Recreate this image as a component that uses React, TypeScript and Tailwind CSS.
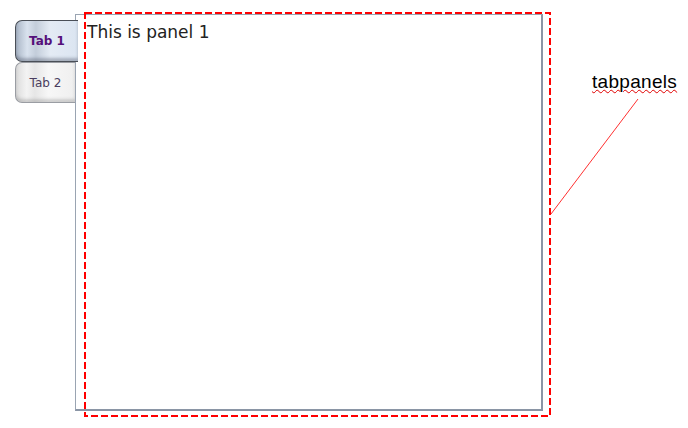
export default function App() {
	return (
		<div className="relative h-[428px] w-[688px] overflow-hidden bg-white">
			<div className="flex pl-[15px] pt-[14px]">
				{/* tabs */}
				<div className="relative z-10 mt-[6px] flex w-[60px] flex-col">
					<div
						className="flex h-[42px] w-[63px] items-center justify-center rounded-l-[7px] border border-r-0 border-[#4a4f57] font-['DejaVu_Sans',sans-serif] text-[12px] font-bold text-[#55107a]
							bg-[linear-gradient(to_right,#aab6c6_0%,#d9e2ee_18%,#c3cdda_32%,#e4ebf4_55%,#dbe5f1_100%)]
							shadow-[inset_0_-3px_3px_rgba(60,70,90,0.35)]"
					>
						Tab 1
					</div>
					<div
						className="flex h-[41px] w-[60px] items-center justify-center rounded-l-[7px] border border-r-0 border-[#9a9da3] font-['DejaVu_Sans',sans-serif] text-[12px] text-[#4a3d5e]
							bg-[linear-gradient(to_right,#dcdcdc_0%,#f3f3f3_18%,#e6e6e6_32%,#f7f7f7_55%,#efefef_100%)]
							shadow-[inset_0_-3px_3px_rgba(90,90,90,0.25)]"
					>
						Tab 2
					</div>
				</div>

				{/* tabpanel */}
				<div className="h-[397px] w-[468px] border-t border-l border-r-2 border-b-2 border-t-[#9aa4b2] border-l-[#9aa4b2] border-r-[#8a95a5] border-b-[#8a95a5] bg-white pl-[11px] pt-[6px] font-['DejaVu_Sans',sans-serif] text-[17px] leading-[22px] text-[#222]">
					This is panel 1
				</div>
			</div>

			{/* annotation */}
			<svg className="pointer-events-none absolute inset-0" width="688" height="428">
				<rect x="85" y="13" width="465" height="403" fill="none" stroke="#ff0000" strokeWidth="2" strokeDasharray="7 3" />
				<line x1="551" y1="214" x2="638" y2="99" stroke="#ff3030" strokeWidth="1" />
			</svg>
			<div className="absolute left-[592px] top-[71px] font-['Liberation_Sans',Arial,sans-serif] text-[19px] leading-[22px] tracking-[0.3px] text-black underline decoration-wavy decoration-[#e00000] decoration-1">
				tabpanels
			</div>
		</div>
	);
}
